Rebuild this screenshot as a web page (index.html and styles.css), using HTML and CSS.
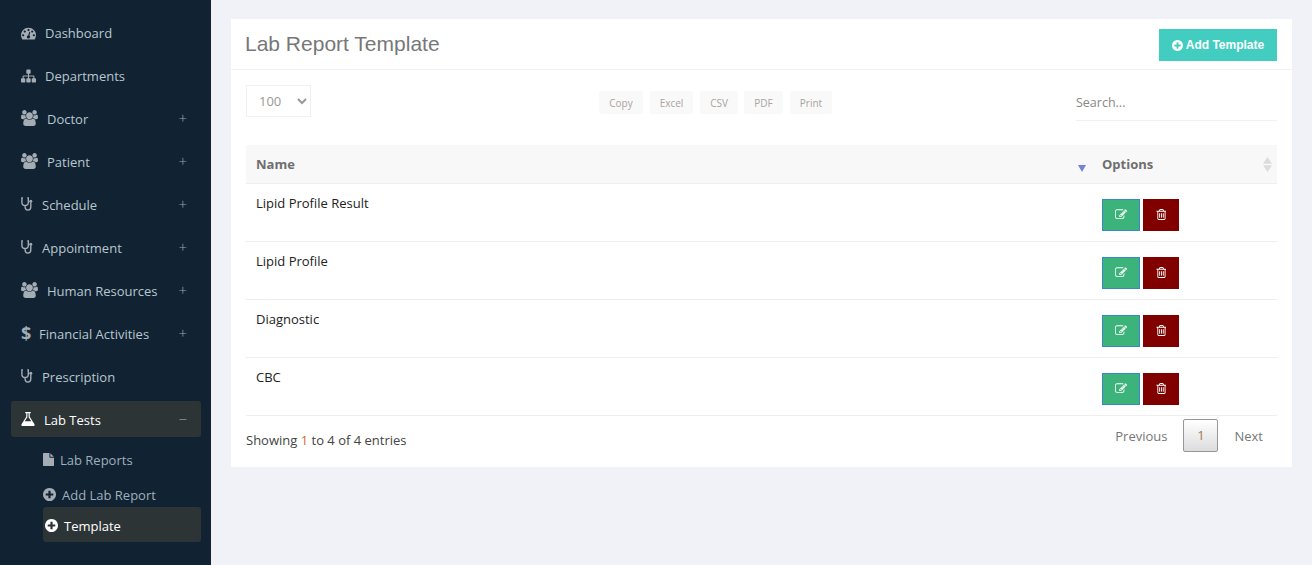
FILE: index.html
```html
<!DOCTYPE html>
<html lang="en">
<head>
<meta charset="utf-8">
<title>Lab Report Template</title>
<link rel="stylesheet" href="styles.css">
</head>
<body>
<svg class="sprite" aria-hidden="true">
  <symbol id="i-dash" viewBox="0 100 1792 1560"><path d="M384 1152q0-53-37.5-90.5t-90.5-37.5-90.5 37.5-37.5 90.5 37.5 90.5 90.5 37.5 90.5-37.5 37.5-90.5zm192-448q0-53-37.5-90.5t-90.5-37.5-90.5 37.5-37.5 90.5 37.5 90.5 90.5 37.5 90.5-37.5 37.5-90.5zm428 481l101-382q6-26-7.5-48.5t-38.5-29.5-48 6.5-30 39.5l-101 382q-60 5-107 43.5t-63 98.5q-20 77 20 146t117 89 146-20 89-117q16-60-6-117t-72-91zm660-33q0-53-37.5-90.5t-90.5-37.5-90.5 37.5-37.5 90.5 37.5 90.5 90.5 37.5 90.5-37.5 37.5-90.5zm-640-640q0-53-37.5-90.5t-90.5-37.5-90.5 37.5-37.5 90.5 37.5 90.5 90.5 37.5 90.5-37.5 37.5-90.5zm448 192q0-53-37.5-90.5t-90.5-37.5-90.5 37.5-37.5 90.5 37.5 90.5 90.5 37.5 90.5-37.5 37.5-90.5zm320 448q0 261-141 483-19 29-54 29h-1402q-35 0-54-29-141-221-141-483 0-182 71-348t191-286 286-191 348-71 348 71 286 191 191 286 71 348z"/></symbol>
  <symbol id="i-site" viewBox="0 128 1792 1536"><path d="M1792 1248v320q0 40-28 68t-68 28h-320q-40 0-68-28t-28-68v-320q0-40 28-68t68-28h96v-192h-512v192h96q40 0 68 28t28 68v320q0 40-28 68t-68 28h-320q-40 0-68-28t-28-68v-320q0-40 28-68t68-28h96v-192h-512v192h96q40 0 68 28t28 68v320q0 40-28 68t-68 28h-320q-40 0-68-28t-28-68v-320q0-40 28-68t68-28h96v-192q0-52 38-90t90-38h512v-192h-96q-40 0-68-28t-28-68v-320q0-40 28-68t68-28h320q40 0 68 28t28 68v320q0 40-28 68t-68 28h-96v192h512q52 0 90 38t38 90v192h96q40 0 68 28t28 68z"/></symbol>
  <symbol id="i-users" viewBox="0 0 1920 1792"><path d="M593 896q-162 5-265 128h-134q-82 0-138-40.5t-56-118.5q0-353 124-353 6 0 43.5 21t97.5 42.5 119 21.5q67 0 133-23-5 37-5 66 0 139 81 256zm1071 637q0 120-73 189.5t-194 69.5h-874q-121 0-194-69.5t-73-189.5q0-53 3.5-103.5t14-109 26.5-108.5 43-97.5 62-81 85.5-53.5 111.5-20q10 0 43 21.5t73 48 107 48 135 21.5 135-21.5 107-48 73-48 43-21.5q61 0 111.5 20t85.5 53.5 62 81 43 97.5 26.5 108.5 14 109 3.5 103.5zm-1024-1277q0 106-75 181t-181 75-181-75-75-181 75-181 181-75 181 75 75 181zm704 384q0 159-112.5 271.5t-271.5 112.5-271.5-112.5-112.5-271.5 112.5-271.5 271.5-112.5 271.5 112.5 112.5 271.5zm576 225q0 78-56 118.5t-138 40.5h-134q-103-123-265-128 81-117 81-256 0-29-5-66 66 23 133 23 59 0 119-21.5t97.5-42.5 43.5-21q124 0 124 353zm-128-609q0 106-75 181t-181 75-181-75-75-181 75-181 181-75 181 75 75 181z"/></symbol>
  <symbol id="i-steth" viewBox="0 0 12 14"><path d="M2 .9H.9v4.3c0 2 1.4 3.3 3.2 3.3s3.2-1.3 3.2-3.3V.9H6.2M4.1 8.5v1.6c0 1.7 1.1 3 2.8 3s2.9-1.3 2.9-3V5.5" fill="none" stroke="currentColor" stroke-width="1.4"/><circle cx="9.8" cy="4.3" r="1.5"/></symbol>
  <symbol id="i-flask" viewBox="128 128 1536 1536"><path d="M1591 1448q56 89 21.5 152.5t-140.5 63.5h-1152q-106 0-140.5-63.5t21.5-152.5l503-793v-399h-64q-26 0-45-19t-19-45 19-45 45-19h512q26 0 45 19t19 45-19 45-45 19h-64v399zm-779-725l-272 429h712l-272-429-20-31v-436h-128v436z"/></symbol>
  <symbol id="i-file" viewBox="128 128 1536 1536"><path d="M1152 512v-472q22 14 36 28l408 408q14 14 28 36h-472zm-128 32q0 40 28 68t68 28h544v1056q0 40-28 68t-68 28h-1344q-40 0-68-28t-28-68v-1600q0-40 28-68t68-28h800v544z"/></symbol>
  <symbol id="i-plus" viewBox="128 128 1536 1536"><path d="M1344 960v-128q0-26-19-45t-45-19h-256v-256q0-26-19-45t-45-19h-128q-26 0-45 19t-19 45v256h-256q-26 0-45 19t-19 45v128q0 26 19 45t45 19h256v256q0 26 19 45t45 19h128q26 0 45-19t19-45v-256h256q26 0 45-19t19-45zm320-64q0 209-103 385.5t-279.5 279.5-385.5 103-385.5-103-279.5-279.5-103-385.5 103-385.5 279.5-279.5 385.5-103 385.5 103 279.5 279.5 103 385.5z"/></symbol>
  <symbol id="i-edit" viewBox="0 128 1792 1536"><path d="M888 1184l116-116-152-152-116 116v56h96v96h56zm440-720q-16-16-33 1l-350 350q-17 17-1 33t33-1l350-350q17-17 1-33zm80 594v190q0 119-84.5 203.5t-203.5 84.5h-832q-119 0-203.5-84.5t-84.5-203.5v-832q0-119 84.5-203.5t203.5-84.5h832q63 0 117 25 15 7 18 23 3 17-9 29l-49 49q-14 14-32 8-23-6-45-6h-832q-66 0-113 47t-47 113v832q0 66 47 113t113 47h832q66 0 113-47t47-113v-126q0-13 9-22l64-64q15-15 35-7t20 29zm-96-738l288 288-672 672h-288v-288zm444 132l-92 92-288-288 92-92q28-28 68-28t68 28l152 152q28 28 28 68t-28 68z"/></symbol>
  <symbol id="i-trash" viewBox="128 128 1408 1536"><path d="M704 736v576q0 14-9 23t-23 9h-64q-14 0-23-9t-9-23v-576q0-14 9-23t23-9h64q14 0 23 9t9 23zm256 0v576q0 14-9 23t-23 9h-64q-14 0-23-9t-9-23v-576q0-14 9-23t23-9h64q14 0 23 9t9 23zm256 0v576q0 14-9 23t-23 9h-64q-14 0-23-9t-9-23v-576q0-14 9-23t23-9h64q14 0 23 9t9 23zm128 724v-948h-896v948q0 22 7 40.5t14.5 27 10.5 8.5h832q3 0 10.5-8.5t14.5-27 7-40.5zm-672-1076h448l-48-117q-7-9-17-11h-317q-10 2-17 11zm928 32v64q0 14-9 23t-23 9h-96v948q0 83-47 143.5t-113 60.5h-832q-66 0-113-63t-47-145v-952h-96q-14 0-23-9t-9-23v-64q0-14 9-23t23-9h309l70-167q15-37 54-63t79-26h320q40 0 79 26t54 63l70 167h309q14 0 23 9t9 23z"/></symbol>
</svg>

<aside class="sidebar">
  <nav class="menu">
    <a class="item"><svg class="ico ico-wide"><use href="#i-dash"/></svg><span class="lbl">Dashboard</span></a>
    <a class="item"><svg class="ico ico-wide"><use href="#i-site"/></svg><span class="lbl">Departments</span></a>
    <a class="item"><svg class="ico ico-users"><use href="#i-users"/></svg><span class="lbl">Doctor</span><span class="tog">+</span></a>
    <a class="item"><svg class="ico ico-users"><use href="#i-users"/></svg><span class="lbl">Patient</span><span class="tog">+</span></a>
    <a class="item"><svg class="ico ico-steth"><use href="#i-steth"/></svg><span class="lbl">Schedule</span><span class="tog">+</span></a>
    <a class="item"><svg class="ico ico-steth"><use href="#i-steth"/></svg><span class="lbl">Appointment</span><span class="tog">+</span></a>
    <a class="item"><svg class="ico ico-users"><use href="#i-users"/></svg><span class="lbl">Human Resources</span><span class="tog">+</span></a>
    <a class="item"><span class="ico-dollar">$</span><span class="lbl">Financial Activities</span><span class="tog">+</span></a>
    <a class="item"><svg class="ico ico-steth"><use href="#i-steth"/></svg><span class="lbl">Prescription</span></a>
    <a class="item active"><svg class="ico ico-flask"><use href="#i-flask"/></svg><span class="lbl">Lab Tests</span><span class="tog">−</span></a>
    <div class="sub">
      <a class="sub-item"><svg class="sub-ico ico-file"><use href="#i-file"/></svg><span>Lab Reports</span></a>
      <a class="sub-item"><svg class="sub-ico"><use href="#i-plus"/></svg><span>Add Lab Report</span></a>
      <a class="sub-item current"><svg class="sub-ico"><use href="#i-plus"/></svg><span>Template</span></a>
    </div>
  </nav>
</aside>

<main class="content">
  <section class="card">
    <header class="card-head">
      <h1 class="title">Lab Report Template</h1>
      <a class="add-btn"><svg class="add-ico"><use href="#i-plus"/></svg>Add Template</a>
    </header>
    <div class="card-body">
      <div class="controls">
        <select class="length"><option>100</option></select>
        <div class="exports">
          <span class="exp exp-copy">Copy</span>
          <span class="exp exp-excel">Excel</span>
          <span class="exp exp-csv">CSV</span>
          <span class="exp exp-pdf">PDF</span>
          <span class="exp exp-print">Print</span>
        </div>
        <div class="search">Search...</div>
      </div>
      <table class="grid">
        <thead>
          <tr>
            <th class="col-name">Name<i class="sort-down"></i></th>
            <th class="col-opt">Options<i class="sort-both"></i></th>
          </tr>
        </thead>
        <tbody>
          <tr><td>Lipid Profile Result</td><td><div class="acts"><a class="act edit"><svg class="act-ico"><use href="#i-edit"/></svg></a><a class="act del"><svg class="act-ico trash"><use href="#i-trash"/></svg></a></div></td></tr>
          <tr><td>Lipid Profile</td><td><div class="acts"><a class="act edit"><svg class="act-ico"><use href="#i-edit"/></svg></a><a class="act del"><svg class="act-ico trash"><use href="#i-trash"/></svg></a></div></td></tr>
          <tr><td>Diagnostic</td><td><div class="acts"><a class="act edit"><svg class="act-ico"><use href="#i-edit"/></svg></a><a class="act del"><svg class="act-ico trash"><use href="#i-trash"/></svg></a></div></td></tr>
          <tr><td>CBC</td><td><div class="acts"><a class="act edit"><svg class="act-ico"><use href="#i-edit"/></svg></a><a class="act del"><svg class="act-ico trash"><use href="#i-trash"/></svg></a></div></td></tr>
        </tbody>
      </table>
      <div class="foot">
        <div class="info">Showing <b>1</b> to 4 of 4 entries</div>
        <div class="pager">
          <a class="pg pg-prev">Previous</a>
          <a class="pg-cur">1</a>
          <a class="pg pg-next">Next</a>
        </div>
      </div>
    </div>
  </section>
</main>
</body>
</html>
```

FILE: styles.css
```css
* { box-sizing: border-box; }
html, body { margin: 0; height: 565px; overflow: hidden; }
body { display: flex; background: #f0f2f7; font-family: "Open Sans", sans-serif; font-size: 13px; color: #222; }
.sprite { display: none; }

.sidebar { width: 211px; flex: none; height: 565px; background: #112233; padding: 14px 10px 0 11px; }
.menu { display: flex; flex-direction: column; }
.item { display: flex; align-items: center; height: 36px; margin-bottom: 7px; padding: 2px 14px 0 10px; border-radius: 3px; color: #b8c7ce; }
.item svg { fill: #a4acb4; color: #a4acb4; }
.lbl { flex: 1; white-space: nowrap; }
.tog { color: #9aa3ab; font-size: 15px; font-weight: 300; line-height: 1; margin-top: -1px; }
.ico { flex: none; }
.ico-wide { width: 15px; height: 14px; margin-right: 9px; }
.ico-users { width: 17px; height: 16px; margin-right: 9px; margin-top: -2px; }
.ico-steth { width: 12px; height: 14px; margin-right: 9px; margin-top: -2px; }
.ico-dollar { width: 9px; margin-right: 9px; color: #a4acb4; font-size: 18px; font-weight: 700; line-height: 1; margin-top: -2px; }
.ico-flask { width: 14px; height: 14px; margin-right: 9px; margin-top: -2px; }
.item.active { background: #2d3436; color: #fff; margin-bottom: 5px; }
.item.active svg { fill: #fff; }

.sub { display: flex; flex-direction: column; padding-left: 32px; }
.sub-item { display: flex; align-items: center; color: #9fb0bb; height: 35px; }
.sub-item:nth-child(2) { margin-bottom: -7px; }
.sub-ico { width: 13px; height: 13px; flex: none; margin-right: 6px; fill: #a4acb4; }
.ico-file { width: 11px; height: 13px; margin-right: 6px; }
.sub-item.current { background: #2d3436; color: #fff; border-radius: 3px; padding: 2px 0 0 2px; margin-top: 2px; }
.sub-item.current svg { fill: #fff; }

.content { flex: 1; padding: 19px 20px 0; }
.card { background: #fff; height: 448px; }
.card-head { display: flex; align-items: center; justify-content: space-between; height: 51px; padding: 0 15px 0 14px; border-bottom: 1px solid #f0f2f7; }
.title { margin: 0; font: 400 21px "Liberation Sans", Arial, sans-serif; color: #777; }
.add-btn { display: flex; align-items: center; justify-content: center; width: 118px; height: 32px; margin-top: 2px; background: #42cdc0; color: #fff; font: 700 12px "Liberation Sans", Arial, sans-serif; }
.add-ico { width: 11px; height: 11px; fill: #fff; margin-right: 3px; }

.card-body { padding: 15px 15px 0; }
.controls { display: grid; grid-template-columns: 65px 1fr 201px; height: 60px; }
.length { width: 65px; height: 32px; padding: 0 0 0 8px; border: 1px solid #f1f1f3; border-radius: 0; background: #fff; color: #999; font: 13px "Open Sans", sans-serif; }
.exports { display: flex; margin-top: 6px; margin-left: 288px; gap: 7px; }
.exp { display: flex; align-items: center; justify-content: center; height: 23px; background: #f9f9f9; border-radius: 2px; color: #a9a3a1; font-size: 10px; font-weight: 400; }
.exp-copy { width: 44px; }
.exp-excel { width: 43px; }
.exp-csv { width: 38px; margin-right: -1px; }
.exp-pdf { width: 39px; }
.exp-print { width: 42px; }
.search { height: 36px; border-bottom: 1px solid #f0f0f2; color: #888; font-size: 12.5px; display: flex; align-items: center; }

.grid { width: 1031px; border-collapse: collapse; table-layout: fixed; }
.grid th { height: 38px; background: #f8f8f8; border-bottom: 1px solid #eee; color: #6f6f6f; font-weight: 700; font-size: 13px; text-align: left; padding: 0 10px; position: relative; }
.col-name { width: 846px; }
.grid td { height: 58px; border-bottom: 1px solid #eee; padding: 10px 10px 0; vertical-align: top; color: #222; }
.grid td:last-child { padding: 15px 10px 0; }
.sort-down { position: absolute; right: 6px; top: 20px; border: 4.5px solid transparent; border-top: 7px solid #7582d8; border-bottom: 0; }
.sort-both { position: absolute; right: 5px; top: 12px; width: 9px; height: 15px; background: #dcdcdc; clip-path: polygon(50% 0, 100% 45%, 0 45%, 0 55%, 100% 55%, 50% 100%, 0 55%, 0 45%); }

.acts { display: flex; gap: 3px; }
.act { display: flex; align-items: center; justify-content: center; height: 32px; }
.edit { width: 38px; background: #3cb37b; border: 1px solid #3a87c8; }
.del { width: 36px; background: #800000; }
.act-ico { width: 12px; height: 11px; fill: #fff; }
.act-ico.trash { width: 10px; height: 11px; }

.foot { display: flex; justify-content: space-between; }
.info { margin-top: 15px; color: #444; }
.info b { font-weight: 400; color: #c9701f; }
.pager { display: flex; align-items: center; margin-top: 3px; }
.pg { color: #777; margin-top: 1px; }
.pg-prev { margin-right: 16px; }
.pg-next { margin-left: 16px; margin-right: 14px; }
.pg-cur { display: flex; align-items: center; justify-content: center; width: 35px; height: 33px; border: 1px solid #979797; border-radius: 2px; background: linear-gradient(#fff, #dcdcdc); color: #a5784f; font-weight: 400; }
```
